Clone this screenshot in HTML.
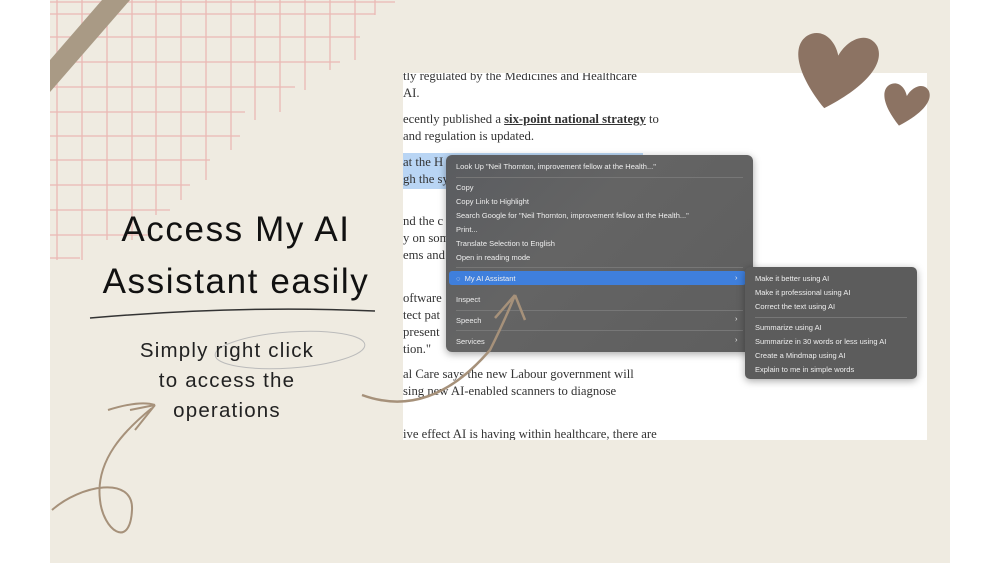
<!DOCTYPE html>
<html><head><meta charset="utf-8"><style>
*{margin:0;padding:0;box-sizing:border-box}
body{width:1000px;height:563px;background:#fff;position:relative;overflow:hidden;font-family:"Liberation Sans",sans-serif}
.bg{position:absolute;left:50px;top:0;width:900px;height:563px;background:#efebe1}
.doc{position:absolute;left:403px;top:73px;width:524px;height:367px;background:#fff;overflow:hidden;font-family:"Liberation Serif",serif;font-size:12.7px;color:#333}
.doc div{position:absolute;left:0;white-space:nowrap}
.menu{position:absolute;left:446px;top:155px;width:307px;height:197px;background:linear-gradient(135deg,#5a5c60,#646464 40%,#5e5e5e);border-radius:6px;color:#eee;font-size:7.5px;box-shadow:0 2px 8px rgba(0,0,0,.35)}
.menu div,.sub div{position:absolute;left:10px;white-space:nowrap}
.sep{height:1px;background:#777;left:10px!important;right:10px}
.sub{position:absolute;left:745px;top:267px;width:172px;height:112px;background:#5c5c5c;border-radius:5px;color:#eee;font-size:7.5px;box-shadow:0 2px 8px rgba(0,0,0,.35)}
.h{font-size:35px;color:#111;position:absolute;text-align:center;width:340px;left:66px;letter-spacing:1.6px}
.s{font-size:20.5px;color:#222;position:absolute;text-align:center;width:300px;left:77px;letter-spacing:1.2px}
</style></head><body>
<div class="bg"></div>
<svg style="position:absolute;left:0;top:0" width="1000" height="563">
<g stroke="#eab8b5" stroke-width="1.3">
<line x1="57" y1="0" x2="57" y2="260"/><line x1="82" y1="0" x2="82" y2="260"/><line x1="107" y1="0" x2="107" y2="240"/><line x1="132" y1="0" x2="132" y2="240"/><line x1="156" y1="0" x2="156" y2="215"/><line x1="181" y1="0" x2="181" y2="200"/><line x1="206" y1="0" x2="206" y2="180"/><line x1="231" y1="0" x2="231" y2="150"/><line x1="255" y1="0" x2="255" y2="120"/><line x1="280" y1="0" x2="280" y2="112"/><line x1="305" y1="0" x2="305" y2="90"/><line x1="330" y1="0" x2="330" y2="70"/><line x1="355" y1="0" x2="355" y2="60"/><line x1="375" y1="0" x2="375" y2="15"/>
<line x1="50" y1="2" x2="395" y2="2"/><line x1="50" y1="14" x2="375" y2="14"/><line x1="50" y1="37" x2="360" y2="37"/><line x1="50" y1="62" x2="340" y2="62"/><line x1="50" y1="87" x2="295" y2="87"/><line x1="50" y1="112" x2="245" y2="112"/><line x1="50" y1="136" x2="240" y2="136"/><line x1="50" y1="160" x2="210" y2="160"/><line x1="50" y1="185" x2="190" y2="185"/><line x1="50" y1="210" x2="170" y2="210"/><line x1="50" y1="235" x2="150" y2="235"/><line x1="50" y1="258" x2="80" y2="258"/>
</g>
<polygon points="50,60 102,0 130,0 50,92" fill="#a99a85"/>
<path d="M108 410 Q140 400 155 405 M155 405 L135 430 M155 405 L130 410" stroke="#a6917a" stroke-width="2" fill="none"/>
<path d="M152 408 C125 430 95 460 100 500 C103 530 130 550 132 510 C134 475 80 485 52 510" stroke="#a6917a" stroke-width="2" fill="none"/>
<ellipse cx="290" cy="350" rx="75" ry="18" stroke="#bbb" stroke-width="1" fill="none" transform="rotate(-4 290 350)"/>
<path d="M90 318 Q240 305 375 311" stroke="#333" stroke-width="1.5" fill="none"/>
</svg>
<div class="h" style="top:210px">Access My AI</div>
<div class="h" style="top:262px">Assistant easily</div>
<div class="s" style="top:339px">Simply right click</div>
<div class="s" style="top:369px">to access the</div>
<div class="s" style="top:399px">operations</div>
<div class="doc">
<div style="top:-4px">tly regulated by the Medicines and Healthcare</div>
<div style="top:13px">AI.</div>
<div style="top:39px">ecently published a <u><b>six-point national strategy</b></u> to</div>
<div style="top:56px">and regulation is updated.</div>
<div style="top:80px;background:#b9d5f4;width:240px;height:36px"></div>
<div style="top:82px">at the H</div>
<div style="top:99px">gh the sy</div>
<div style="top:141px">nd the c</div>
<div style="top:158px">y on som</div>
<div style="top:175px">ems and</div>
<div style="top:218px">oftware</div>
<div style="top:235px">tect pat</div>
<div style="top:252px"> present</div>
<div style="top:269px">tion."</div>
<div style="top:294px">al Care says the new Labour government will</div>
<div style="top:311px">sing new AI-enabled scanners to diagnose</div>
<div style="top:354px">ive effect AI is having within healthcare, there are</div>
</div>
<div class="menu">
<div style="top:7px">Look Up "Neil Thornton, improvement fellow at the Health..."</div>
<div class="sep" style="top:22px"></div>
<div style="top:28px">Copy</div>
<div style="top:42px">Copy Link to Highlight</div>
<div style="top:56px">Search Google for "Neil Thornton, improvement fellow at the Health..."</div>
<div style="top:70px">Print...</div>
<div style="top:84px">Translate Selection to English</div>
<div style="top:98px">Open in reading mode</div>
<div class="sep" style="top:112px"></div>
<div style="top:116px;left:3px;width:297px;height:14px;background:#3f7fdc;border-radius:3px"></div>
<div style="top:119px;left:10px">◌ &nbsp;My AI Assistant</div><div style="top:118px;left:289px">›</div>
<div style="top:140px">Inspect</div>
<div class="sep" style="top:155px"></div>
<div style="top:161px">Speech</div><div style="top:159px;left:289px">›</div>
<div class="sep" style="top:175px"></div>
<div style="top:182px">Services</div><div style="top:180px;left:289px">›</div>
</div>
<div class="sub">
<div style="top:7px">Make it better using AI</div>
<div style="top:21px">Make it professional using AI</div>
<div style="top:35px">Correct the text using AI</div>
<div class="sep" style="top:50px"></div>
<div style="top:56px">Summarize using AI</div>
<div style="top:70px">Summarize in 30 words or less using AI</div>
<div style="top:84px">Create a Mindmap using AI</div>
<div style="top:98px">Explain to me in simple words</div>
</div>
<svg style="position:absolute;left:0;top:0" width="1000" height="563">
<path d="M362 395 Q430 420 490 350 Q505 320 515 295 M515 295 L495 318 M515 295 L525 320" stroke="#a6917a" stroke-width="2.5" fill="none"/>
<path transform="translate(835,68) rotate(15) scale(1.6)" d="M0 26 C-22 10 -30 -6 -22 -15 C-15 -22 -5 -18 0 -8 C3 -20 14 -28 22 -20 C30 -10 20 8 0 26Z" fill="#8c7363"/>
<path transform="translate(905,103) rotate(15) scale(0.9)" d="M0 26 C-22 10 -30 -6 -22 -15 C-15 -22 -5 -18 0 -8 C3 -20 14 -28 22 -20 C30 -10 20 8 0 26Z" fill="#8c7363"/>
</svg>
</body></html>
